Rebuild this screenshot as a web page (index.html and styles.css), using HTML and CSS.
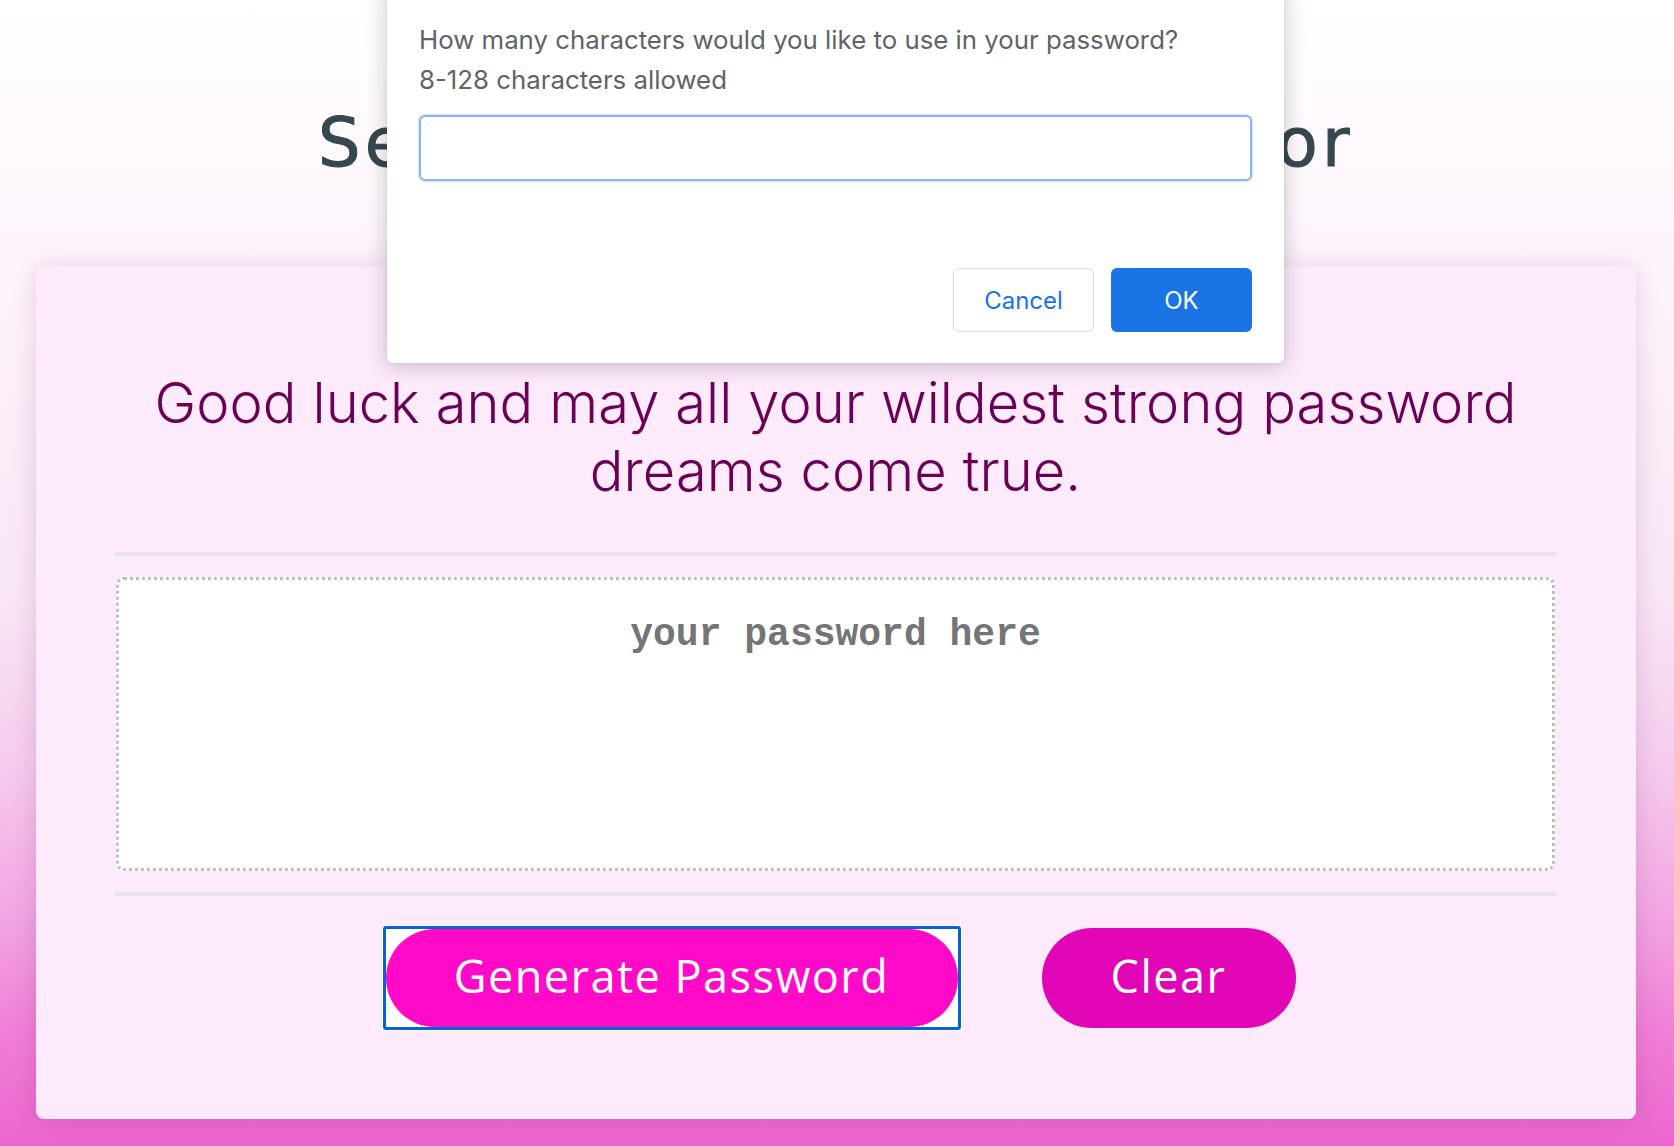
FILE: index.html
```html
<!DOCTYPE html>
<html lang="en">
<head>
<meta charset="utf-8">
<title>Password Generator</title>
<link rel="stylesheet" href="styles.css">
</head>
<body>
  <div class="page">
    <header class="header">
      <h1 class="title">Secure Password Generator</h1>
    </header>
    <main class="card">
      <p class="card-lead">Good luck and may all your wildest strong password dreams come true.</p>
      <hr class="rule">
      <textarea class="password" readonly placeholder="your password here" aria-label="Generated Password"></textarea>
      <hr class="rule">
      <div class="actions">
        <span class="focus-ring"><button class="btn btn-generate" type="button">Generate Password</button></span>
        <button class="btn btn-clear" type="button">Clear</button>
      </div>
    </main>
  </div>

  <div class="prompt" role="dialog">
    <p class="prompt-text">How many characters would you like to use in your password?</p>
    <p class="prompt-text">8-128 characters allowed</p>
    <div class="prompt-input"></div>
    <div class="prompt-actions">
      <button class="prompt-btn prompt-cancel" type="button">Cancel</button>
      <button class="prompt-btn prompt-ok" type="button">OK</button>
    </div>
  </div>
</body>
</html>
```

FILE: styles.css
```css
html {
  height: 100%;
}

body {
  margin: 0;
  min-height: 100%;
  background: linear-gradient(180deg, #ffffff 0%, #fdf3fb 25%, #f9e6f5 52%, #f6cdee 66%, #f3a5e3 80%, #f07fd7 90%, #ed66cf 100%);
  font-family: "Liberation Sans", Arial, sans-serif;
  overflow: hidden;
}

.page {
  height: 1146px;
  display: flex;
  flex-direction: column;
  padding: 0 38px 0 36px;
  box-sizing: border-box;
}

.header {
  padding-top: 110px;
  height: 266px;
  box-sizing: border-box;
}

.title {
  margin: 0;
  text-align: center;
  font-family: "DejaVu Sans", sans-serif;
  font-weight: 400;
  font-size: 67px;
  line-height: 1;
  letter-spacing: 4.4px;
  -webkit-text-stroke: 1px #37474f;
  color: #37474f;
}

.card {
  height: 853px;
  box-sizing: border-box;
  background: #fdebfc;
  border-radius: 8px;
  box-shadow: 0 2px 26px rgba(90, 20, 80, 0.16);
  padding: 103px 80px 0 79px;
  display: flex;
  flex-direction: column;
}

.card-lead {
  margin: 0;
  text-align: center;
  font-family: "Inter", sans-serif;
  font-weight: 300;
  font-size: 56px;
  line-height: 68px;
  letter-spacing: 0.1px;
  color: #6b0055;
}

.rule {
  margin: 47px 0 0;
  border: 0;
  height: 4px;
  background: #e8e4ec;
}

.password {
  margin: 21px 1px 0 1px;
  height: 294px;
  box-sizing: border-box;
  border: 3px dotted #bcc0c6;
  border-radius: 8px;
  background: #ffffff;
  resize: none;
  padding: 33px 20px 20px;
  text-align: center;
  font-family: "Liberation Mono", "Courier New", monospace;
  font-size: 38px;
  font-weight: 700;
  color: #6b6b6b;
  outline: none;
}

.password::placeholder {
  color: #757575;
  opacity: 1;
}

.password + .rule {
  margin-top: 21px;
}

.actions {
  margin-top: 30px;
  display: flex;
  justify-content: center;
  align-items: center;
  gap: 81px;
  padding-left: 7px;
}

.focus-ring {
  display: inline-flex;
  border: 3px solid #0564d1;
  border-radius: 3px;
  background: #ffffff;
  box-shadow: 0 0 0 1px #ffffff;
}

.btn {
  border: 0;
  border-radius: 50px;
  color: #ffffff;
  font-family: "Open Sans", sans-serif;
  font-size: 45px;
  font-weight: 400;
  letter-spacing: 1.5px;
  cursor: pointer;
  padding: 0 0 6px;
}

.btn-generate {
  width: 572px;
  height: 98px;
  background: #ff0ac8;
}

.btn-clear {
  width: 254px;
  height: 100px;
  background: #e205b5;
}

/* browser prompt overlay */
.prompt {
  position: absolute;
  left: 387px;
  top: -20px;
  width: 897px;
  height: 383px;
  box-sizing: border-box;
  background: #ffffff;
  border-radius: 0 0 5px 5px;
  box-shadow: 0 3px 22px rgba(0, 0, 0, 0.22), 0 0 1px rgba(0, 0, 0, 0.3);
  padding: 40px 32px 0 32px;
  display: flex;
  flex-direction: column;
}

.prompt-text {
  margin: 0;
  font-family: "Inter", "Liberation Sans", sans-serif;
  font-size: 25.8px;
  line-height: 40px;
  color: #5f6368;
}

.prompt-input {
  margin-top: 15px;
  height: 66px;
  box-sizing: border-box;
  border: 2px solid #8ab4f6;
  border-radius: 6px;
  background: #ffffff;
  box-shadow: 0 0 0 1px rgba(138, 180, 246, 0.35);
}

.prompt-actions {
  margin-top: 87px;
  display: flex;
  justify-content: flex-end;
  gap: 17px;
}

.prompt-btn {
  width: 141px;
  height: 64px;
  box-sizing: border-box;
  border-radius: 6px;
  font-family: "Inter", "Liberation Sans", sans-serif;
  font-size: 24px;
  cursor: pointer;
}

.prompt-cancel {
  background: #ffffff;
  border: 1px solid #dadce0;
  color: #1a73e8;
}

.prompt-ok {
  background: #1b74e4;
  border: 0;
  color: #ffffff;
}
```
